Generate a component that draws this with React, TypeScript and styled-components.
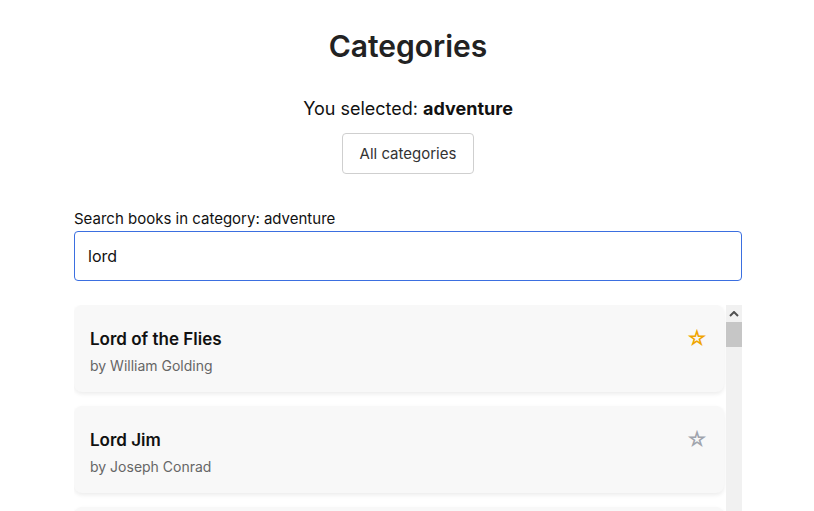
import React from "react";
import styled, { createGlobalStyle } from "styled-components";

const Global = createGlobalStyle`
  html, body { margin: 0; padding: 0; overflow: hidden; background: #fff; }
  body { font-family: "Inter", "Noto Sans", sans-serif; color: #222; }
  * { box-sizing: border-box; }
`;

const Page = styled.main`
  width: 668px;
  margin: 0 0 0 74px;
  display: flex;
  flex-direction: column;
  align-items: center;
`;

const Title = styled.h1`
  margin: 28px 0 0;
  font-size: 30px;
  font-weight: 600;
  line-height: 36px;
  color: #222;
`;

const Selected = styled.p`
  margin: 33px 0 0;
  font-size: 18px;
  line-height: 24px;
  color: #111;
  b { font-weight: 700; }
`;

const Button = styled.button`
  margin-top: 12px;
  width: 132px;
  height: 41px;
  border: 1px solid #cfcfcf;
  border-radius: 4px;
  background: #fff;
  font-family: inherit;
  font-size: 15px;
  color: #333;
`;

const Field = styled.label`
  align-self: stretch;
  margin-top: 36px;
  display: flex;
  flex-direction: column;
  gap: 3px;
  font-size: 15px;
  line-height: 18px;
  color: #111;
`;

const Input = styled.input`
  height: 50px;
  border: 1px solid #3b6fe0;
  border-radius: 4px;
  padding: 0 13px;
  font-family: inherit;
  font-size: 16px;
  color: #111;
  outline: none;
`;

const ListFrame = styled.section`
  align-self: stretch;
  margin-top: 24px;
  height: 206px;
  display: flex;
`;

const List = styled.ul`
  flex: 1;
  list-style: none;
  margin: 0;
  padding: 0 0 8px;
  overflow: hidden;
  display: flex;
  flex-direction: column;
  gap: 14px;
`;

const ScrollBar = styled.div`
  flex: none;
  width: 16px;
  background: #f1f1f1;
  display: flex;
  flex-direction: column;
`;

const ScrollArrow = styled.div`
  height: 17px;
  display: flex;
  align-items: center;
  justify-content: center;
`;

const ScrollThumb = styled.div`
  height: 25px;
  background: #c6c6c6;
`;

const Card = styled.li`
  flex: none;
  height: 87px;
  margin-right: 2px;
  background: #f8f8f8;
  border-radius: 8px;
  box-shadow: 0 2px 4px rgba(0, 0, 0, 0.08);
  padding: 23px 16px 0;
  display: flex;
  justify-content: space-between;
`;

const Info = styled.div`
  display: flex;
  flex-direction: column;
  gap: 7px;
`;

const BookTitle = styled.span`
  font-size: 17px;
  font-weight: 600;
  line-height: 22px;
  color: #111;
`;

const Author = styled.span`
  font-size: 14px;
  line-height: 18px;
  color: #666;
`;

const Star = styled.span<{ $on: boolean }>`
  font-size: 21px;
  line-height: 22px;
  color: ${(p) => (p.$on ? "#f0a500" : "#a0a4ad")};
`;

const books = [
  { title: "Lord of the Flies", author: "William Golding", fav: true },
  { title: "Lord Jim", author: "Joseph Conrad", fav: false },
];

export default function App() {
  return (
    <>
      <Global />
      <Page>
        <Title>Categories</Title>
        <Selected>
          You selected: <b>adventure</b>
        </Selected>
        <Button>All categories</Button>
        <Field>
          Search books in category: adventure
          <Input defaultValue="lord" />
        </Field>
        <ListFrame>
          <List>
            {books.map((b, i) => (
              <Card key={i}>
                <Info>
                  <BookTitle>{b.title}</BookTitle>
                  <Author>by {b.author}</Author>
                </Info>
                <Star $on={b.fav}>☆</Star>
              </Card>
            ))}
            <Card aria-hidden="true" />
          </List>
          <ScrollBar>
            <ScrollArrow>
              <svg width="10" height="6" viewBox="0 0 10 6">
                <path d="M1 5 L5 1 L9 5" fill="none" stroke="#505050" strokeWidth="2" />
              </svg>
            </ScrollArrow>
            <ScrollThumb />
          </ScrollBar>
        </ListFrame>
      </Page>
    </>
  );
}
